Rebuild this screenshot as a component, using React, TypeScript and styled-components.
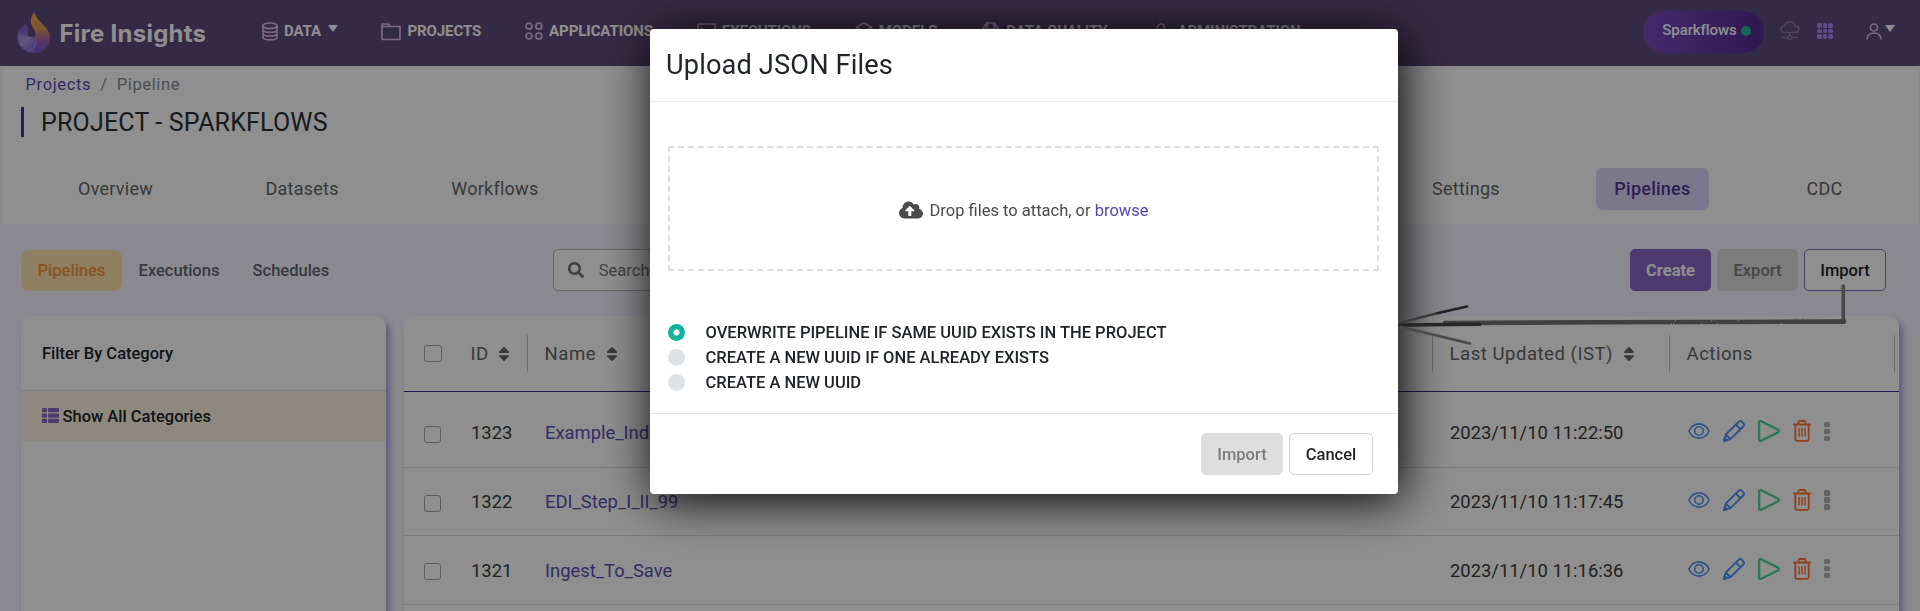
import React from "react";
import styled, { createGlobalStyle, css } from "styled-components";
import { FaSearch, FaSort, FaThList, FaCloudUploadAlt } from "react-icons/fa";

const Global = createGlobalStyle`
  *, *::before, *::after { box-sizing: border-box; }
  html, body { margin: 0; padding: 0; }
  body {
    background: #f7f5ff;
    font-family: Roboto, "Liberation Sans", sans-serif;
    font-size: 16.5px;
    color: #212529;
    overflow: hidden;
  }
  svg { display: block; flex: none; }
`;

const Page = styled.div`
  height: 611px;
  overflow: hidden;
  display: flex;
  flex-direction: column;
`;

/* ---------- top navigation ---------- */

const NavBar = styled.nav`
  height: 66px;
  flex: none;
  display: flex;
  align-items: center;
  background: #5f4b7b;
  color: #fff;
  padding: 0 25px 4px 17px;
`;

const Brand = styled.div`
  display: flex;
  align-items: center;
  gap: 8.5px;
  width: 245px;
  font: 700 24px/32px Inter, sans-serif;
  letter-spacing: 0.25px;
  padding-top: 3px;
`;

const BrandName = styled.span`
  padding-top: 3px;
`;

const NavItems = styled.div`
  display: flex;
  gap: 43.7px;
`;

const NavItem = styled.div<{ $tight?: boolean }>`
  display: flex;
  align-items: center;
  gap: ${(p) => (p.$tight ? 6 : 6.2)}px;
  font-size: 15px;
  font-weight: 700;
  letter-spacing: -0.08px;
  white-space: nowrap;

  svg {
    color: #e0b6ee;
  }
`;

const Caret = styled.i`
  width: 0;
  height: 0;
  border: 5px solid transparent;
  border-top: 7px solid #fff;
  border-bottom: 0;
  margin: -5px 0 0 0.5px;
`;

const NavRight = styled.div`
  margin-left: auto;
  display: flex;
  align-items: center;
`;

const OrgPill = styled.div`
  height: 42px;
  width: 121px;
  margin: 2px 16px 0 0;
  padding: 0 13px 4px 19px;
  border-radius: 21px;
  display: flex;
  align-items: center;
  justify-content: space-between;
  background: linear-gradient(90deg, #7b4cc0, #552a92);
  font-size: 15px;
  font-weight: 500;
  letter-spacing: -0.1px;
`;

const StatusDot = styled.i`
  width: 10px;
  height: 10px;
  margin-top: 2px;
  border-radius: 50%;
  background: #2ab795;
`;

const AppsGrid = styled.div`
  display: grid;
  grid-template-columns: repeat(3, 4.4px);
  gap: 1px;
  margin: 0 33px 0 17px;

  i {
    height: 4.4px;
    border-radius: 1.6px;
    background: #a986ff;
  }
`;

const UserMenu = styled.div`
  display: flex;
  align-items: center;
  gap: 3px;
  color: #e0b6ee;
`;

/* ---------- project header ---------- */

const ProjectPanel = styled.header`
  margin: 3px 2px 0 3px;
  height: 155px;
  flex: none;
  background: #fff;
  padding-top: 5px;
`;

const Crumbs = styled.div`
  display: flex;
  gap: 9px;
  padding-left: 22.5px;
  line-height: 22px;
  letter-spacing: 0.65px;
  color: #868b90;
`;

const Link = styled.a<{ $tone?: string }>`
  color: ${(p) => p.$tone || "#5b4fb5"};
`;

const ProjectTitle = styled.h1`
  margin: 11px 0 0 18px;
  height: 30px;
  line-height: 32px;
  border-left: 3px solid #4d32a3;
  padding-left: 17px;
  font-size: 25px;
  font-weight: 400;
  letter-spacing: 0.18px;
  color: #2c3034;
`;

const Tabs = styled.div`
  display: flex;
  align-items: center;
  height: 42px;
  margin-top: 31px;
  padding: 0 57px 0 56.5px;
`;

const Tab = styled.div<{ $active?: boolean; $gap?: number }>`
  height: 42px;
  line-height: 41.5px;
  padding: 0 18.5px;
  margin-right: ${(p) => p.$gap || 0}px;
  border-radius: 7px;
  font-size: 18px;
  letter-spacing: 0.25px;
  color: #636668;
  ${(p) =>
    p.$active &&
    css`
      background: #dcd5fa;
      color: #503993;
      font-weight: 500;
    `}
`;

const Spacer = styled.div`
  flex: 1;
`;

/* ---------- toolbar ---------- */

const Toolbar = styled.div`
  display: flex;
  align-items: center;
  height: 92px;
  flex: none;
  padding: 0 34px 0 21px;
`;

const SubTab = styled.div<{ $active?: boolean }>`
  height: 41px;
  line-height: 41px;
  padding: 0 16.6px;
  border-radius: 8px;
  font-weight: 500;
  color: #62676f;
  ${(p) =>
    p.$active &&
    css`
      background: #ffe1ac;
      color: #f5933a;
    `}
`;

const SearchBox = styled.div`
  margin-left: 207px;
  width: 560px;
  height: 42px;
  border: 1px solid #b9b9b9;
  border-radius: 5px;
  background: #fff;
  display: flex;
  align-items: center;
  gap: 15px;
  padding-left: 14px;
  color: #757575;
`;

const Actions = styled.div`
  margin-left: auto;
  display: flex;
  gap: 6px;
`;

type Variant = "primary" | "disabled" | "outline" | "plain";

const variants = {
  primary: css`
    background: #8d68c8;
    border-color: #8d68c8;
    color: #fff;
    font-weight: 700;
  `,
  disabled: css`
    background: #dedede;
    border-color: #dedede;
    color: #7c7c7c;
  `,
  outline: css`
    background: #fff;
    border-color: #8d68c8;
    color: #212529;
  `,
  plain: css`
    background: #fff;
    border-color: #ced4da;
    color: #212529;
  `,
};

const Button = styled.button<{ $variant: Variant; $width?: number }>`
  width: ${(p) => p.$width || 81}px;
  height: 42px;
  padding: 1px 0 0;
  border: 1px solid;
  border-radius: 5px;
  font: 500 16.5px/20px Roboto, sans-serif;
  ${(p) => variants[p.$variant]}
`;

/* ---------- content cards ---------- */

const Content = styled.main`
  display: flex;
  gap: 18px;
  padding: 0 21px;
  flex: 1;
`;

const Card = styled.section<{ $width: number }>`
  width: ${(p) => p.$width}px;
  flex: none;
  height: 340px;
  background: #fff;
  border-radius: 10px 10px 0 0;
  box-shadow: 4px 5px 6px #ada2e0;
`;

const FilterHeader = styled.div`
  height: 75px;
  line-height: 75px;
  padding-left: 21px;
  border-bottom: 1px solid #dee2e6;
  font-weight: 500;
`;

const FilterRow = styled.div`
  height: 50px;
  display: flex;
  align-items: center;
  gap: 3.5px;
  padding-left: 21px;
  background: #fcf5e0;
  font-weight: 500;

  svg {
    color: #8d68c8;
    margin-top: -2px;
  }
`;

const TableRow = styled.div`
  display: grid;
  grid-template-columns: 50px 74px 905px 237px 225px;
  align-items: center;
`;

const TableHead = styled(TableRow)`
  height: 76px;
  border-bottom: 1px solid #382c8c;
  margin-bottom: 7px;
`;

const BodyRow = styled(TableRow)`
  height: 68.7px;
  border-bottom: 1px solid #dfe1e4;
`;

const HeadCell = styled.div<{ $rule?: boolean }>`
  height: 37px;
  display: flex;
  align-items: center;
  gap: 6.5px;
  padding-left: 16.5px;
  font-size: 18.6px;
  letter-spacing: 0.5px;
  color: #666;
  border-right: ${(p) => (p.$rule ? "1px solid #c4c4c4" : "0")};
`;

const Cell = styled.div`
  padding-left: 17px;
  font-size: 18.4px;
  color: #3b3b3b;
`;

const Check = styled.i<{ $size: number }>`
  width: ${(p) => p.$size}px;
  height: 17px;
  margin: ${(p) => (p.$size > 17 ? 0 : 3)}px 0 0 20px;
  border: 1px solid #a4a4a4;
  border-radius: 3px;
`;

const RowActions = styled.div`
  display: flex;
  align-items: center;
  gap: 13px;
  padding: 0 0 3px 18px;
`;

const Kebab = styled.div`
  display: grid;
  gap: 1.7px;

  i {
    width: 6px;
    height: 5.3px;
    border-radius: 1.5px;
    background: #aeb2b7;
  }
`;

/* ---------- modal ---------- */

const Overlay = styled.div`
  position: fixed;
  inset: 0;
  background: rgba(0, 0, 0, 0.44);
  display: flex;
  justify-content: center;
  align-items: flex-start;
  padding: 29px 0 0 128px;
`;

const Dialog = styled.div`
  width: 748px;
  height: 465px;
  background: #fff;
  border-radius: 4px;
  box-shadow: 4px 6px 50px #000;
  display: flex;
  flex-direction: column;
`;

const DialogHead = styled.div`
  height: 73px;
  line-height: 72px;
  border-bottom: 1px solid #e9ecef;
  padding-left: 16px;
  font-size: 27.2px;
  letter-spacing: 0.14px;
`;

const DialogBody = styled.div`
  flex: 1;
  padding: 44px 19px 0 18px;
`;

const DropZone = styled.div`
  height: 125px;
  border: 2px dashed #ddd;
  display: flex;
  align-items: center;
  justify-content: center;
  gap: 7px;
  color: #4a4a4a;
  padding-top: 3px;
`;

const Options = styled.div`
  margin-top: 49px;
`;

const Option = styled.label`
  height: 25px;
  display: flex;
  align-items: center;
  gap: 20.5px;
  font-weight: 500;
`;

const Radio = styled.i<{ $on?: boolean }>`
  width: 17px;
  height: 17px;
  border-radius: 50%;
  background: ${(p) =>
    p.$on ? "radial-gradient(circle, #fff 2.7px, #12b39b 3.4px)" : "#dee2e6"};
`;

const DialogFoot = styled.div`
  height: 81px;
  border-top: 1px solid #e0e2e4;
  display: flex;
  justify-content: flex-end;
  gap: 6px;
  padding: 19px 25px 0 0;
`;

/* Hand-drawn annotation lying over the page. */
const ArrowLayer = styled.svg`
  position: fixed;
  left: 1390px;
  top: 270px;
`;

/* ---------- drawings ---------- */

const Logo = () => (
  <svg width="34" height="42" viewBox="17 12 34 42">
    <defs>
      <linearGradient id="flame" x1="0" y1="0" x2="0" y2="1">
        <stop offset="0" stopColor="#f5b04a" />
        <stop offset="0.4" stopColor="#e29a55" />
        <stop offset="0.7" stopColor="#9a64b0" />
        <stop offset="1" stopColor="#7355d8" />
      </linearGradient>
      <linearGradient id="swirl" x1="0" y1="0" x2="0.7" y2="1">
        <stop offset="0" stopColor="#6a48c8" />
        <stop offset="0.55" stopColor="#9c88dc" />
        <stop offset="1" stopColor="#7a5fd6" />
      </linearGradient>
    </defs>
    <path d="M27 23C20 27 17.500 32 17.700 37C18 46 25 53 34 53C41 53 46 48 47 42L36 36C34 38.500 29 38 28 35C27 31 28.500 27 27 23Z" fill="url(#swirl)" />
    <path d="M34.500 12C30.500 17 30 22 32 26C34 29.500 36 32 35.500 35C35 37 33 37.800 31 37C36 40 38 46 34 53C43 53 50 46 50 37C50 27 37 23 34.500 12Z" fill="url(#flame)" />
    <path d="M18 31C21 36 27 38 33 37M20 46C26 47 32 44 34 38M28 52C33 50 37 45 36 38" fill="none" stroke="#c3b6f2" strokeOpacity="0.55" strokeWidth="0.9" />
    <path d="M18 33C21 37 27 38 31 37C30 42 26 45 20 46C18 43 17 38 18 33Z" fill="#b9abea" fillOpacity="0.5" />
  </svg>
);

const line = { fill: "none", stroke: "currentColor", strokeWidth: 1.7, strokeLinecap: "round", strokeLinejoin: "round" } as const;

const DatabaseIcon = () => (
  <svg width="16" height="19" viewBox="0 0 16 19" {...line}>
    <ellipse cx="8" cy="3.800" rx="7" ry="2.800" />
    <path d="M1 3.800V15c0 1.600 3 2.900 7 2.900s7-1.300 7-2.900V3.800M1 7.500c0 1.600 3 2.900 7 2.900s7-1.300 7-2.900M1 11.300c0 1.600 3 2.900 7 2.900s7-1.300 7-2.900" />
  </svg>
);
const FolderIcon = () => (
  <svg width="20" height="19" viewBox="0 0 20 19" {...line}>
    <path d="M1 17V2h6.500l2 2.500H19V17.500H1.500zM1 4.500h9" />
  </svg>
);
const CirclesIcon = () => (
  <svg width="18" height="18" viewBox="0 0 18 18" {...line}>
    <circle cx="4" cy="4.200" r="3" /><circle cx="13.800" cy="4.200" r="3" />
    <circle cx="4" cy="14" r="3" /><circle cx="13.800" cy="14" r="3" />
  </svg>
);
const WindowIcon = () => (
  <svg width="19" height="16" viewBox="0 0 19 16" {...line}>
    <path d="M1 1h17v14H1zM4.500 5l3 3-3 3M10 11h4" />
  </svg>
);
const HexIcon = () => (
  <svg width="18" height="18" viewBox="0 0 18 18" {...line}>
    <path d="M9 1l7.500 4.200v7.600L9 17l-7.500-4.200V5.200zM1.500 5.200L9 9.500l7.500-4.300M9 9.500V17" />
  </svg>
);
const GlobeIcon = () => (
  <svg width="19" height="18" viewBox="0 0 18 18" {...line}>
    <path d="M5 1h8l4 6-8 10L1 7zM6.500 1C4 6 5 12 9 17c4-5 5-11 2.500-16M1 7h16" />
  </svg>
);
const PersonIcon = ({ width = 16 }: { width?: number }) => (
  <svg width={width} height="17" viewBox="0 0 16 17" {...line}>
    <circle cx="8" cy="4.500" r="3.500" />
    <path d="M1 15.800c.5-3.600 3.200-5.800 7-5.800s6.500 2.200 7 5.800" />
  </svg>
);
const CloudIcon = () => (
  <svg width="20" height="20" viewBox="0 0 20 20" {...line} stroke="#8d7da6" strokeWidth="1.500">
    <path d="M5 11.500C2.500 11.500 1 10 1 8.200 1 6.300 2.500 5 4.500 5 5.200 2.500 7.300 1 10 1s4.700 1.500 5.300 4c2.200 0 3.700 1.400 3.700 3.300 0 1.800-1.500 3.200-3.700 3.200zM10 11.500v3M2.500 16.600h5M12.500 16.600h5" />
    <circle cx="10" cy="16.600" r="2" />
  </svg>
);
const EyeIcon = () => (
  <svg width="22" height="16" viewBox="0 0 22 16" {...line} stroke="#4f94f5" strokeWidth="1.600">
    <path d="M.8 8C3 3.500 6.500.9 11 .9S19 3.500 21.200 8C19 12.500 15.500 15.100 11 15.100S3 12.500.8 8z" />
    <circle cx="11" cy="8" r="4.200" />
  </svg>
);
const PencilIcon = () => (
  <svg width="22" height="22" viewBox="0 0 22 22" {...line} stroke="#4f94f5" strokeWidth="1.900">
    <path d="M1 21l1.800-6.500L15.500 1.800c1-1 2.300-1 3.200-.1l1.600 1.600c.9.900.9 2.200-.1 3.200L7.500 19.200zM12.800 4.500l4.700 4.700M3 14.800l4.300 4.200" />
    <path d="M1 21l.8-3 2.200 2.200z" fill="#4f94f5" />
  </svg>
);
const PlayIcon = () => (
  <svg width="22" height="22" viewBox="0 0 22 22" {...line} stroke="#42d892" strokeWidth="2.200">
    <path d="M1.200 2.300c0-1.100 1-1.600 2-1.100l17 8.600c1 .6 1 1.800 0 2.400l-17 8.600c-1 .5-2 0-2-1.100z" />
  </svg>
);
const TrashIcon = () => (
  <svg width="18" height="22" viewBox="0 0 18 22" {...line} stroke="#ff7230" strokeWidth="1.800">
    <path d="M.9 4.500h16.200M2.300 4.500v14.800c0 .9.600 1.500 1.500 1.500h10.400c.9 0 1.500-.6 1.500-1.500V4.500M5.500 4.300V2.500c0-.9.500-1.500 1.400-1.500h4.200c.9 0 1.400.6 1.400 1.500v1.800" />
    <path d="M6 8.500v7.500M9 8.500v7.500M12 8.500v7.500" strokeWidth="1.400" />
  </svg>
);

const rows = [
  { id: "1323", name: "Example_Industry", date: "2023/11/10 11:22:50" },
  { id: "1322", name: "EDI_Step_I_II_99", date: "2023/11/10 11:17:45" },
  { id: "1321", name: "Ingest_To_Save", date: "2023/11/10 11:16:36" },
];

const SortMark = () => <FaSort size={18} color="#666" />;

export default function App() {
  return (
    <>
      <Global />
      <Page>
        <NavBar>
          <Brand>
            <Logo />
            <BrandName>Fire Insights</BrandName>
          </Brand>
          <NavItems>
            <NavItem $tight><DatabaseIcon />DATA<Caret /></NavItem>
            <NavItem><FolderIcon />PROJECTS</NavItem>
            <NavItem><CirclesIcon />APPLICATIONS</NavItem>
            <NavItem><WindowIcon />EXECUTIONS</NavItem>
            <NavItem><HexIcon />MODELS</NavItem>
            <NavItem><GlobeIcon />DATA QUALITY</NavItem>
            <NavItem><PersonIcon width={20} />ADMINISTRATION</NavItem>
          </NavItems>
          <NavRight>
            <OrgPill>Sparkflows<StatusDot /></OrgPill>
            <CloudIcon />
            <AppsGrid>
              {Array.from({ length: 9 }, (_, i) => <i key={i} />)}
            </AppsGrid>
            <UserMenu><PersonIcon /><Caret /></UserMenu>
          </NavRight>
        </NavBar>

        <ProjectPanel>
          <Crumbs>
            <Link>Projects</Link>
            <span>/</span>
            <span>Pipeline</span>
          </Crumbs>
          <ProjectTitle>PROJECT - SPARKFLOWS</ProjectTitle>
          <Tabs>
            <Tab $gap={75.5}>Overview</Tab>
            <Tab $gap={75.5}>Datasets</Tab>
            <Tab>Workflows</Tab>
            <Spacer />
            <Tab $gap={77.5}>Settings</Tab>
            <Tab $gap={79} $active>Pipelines</Tab>
            <Tab>CDC</Tab>
          </Tabs>
        </ProjectPanel>

        <Toolbar>
          <SubTab $active>Pipelines</SubTab>
          <SubTab>Executions</SubTab>
          <SubTab>Schedules</SubTab>
          <SearchBox><FaSearch size={16} />Search</SearchBox>
          <Actions>
            <Button $variant="primary">Create</Button>
            <Button $variant="disabled">Export</Button>
            <Button $variant="outline" $width={82}>Import</Button>
          </Actions>
        </Toolbar>

        <Content>
          <Card $width={365}>
            <FilterHeader>Filter By Category</FilterHeader>
            <FilterRow><FaThList size={17} />Show All Categories</FilterRow>
          </Card>
          <Card $width={1495}>
            <TableHead>
              <Check $size={18} />
              <HeadCell $rule>ID<SortMark /></HeadCell>
              <HeadCell $rule>Name<SortMark /></HeadCell>
              <HeadCell $rule>Last Updated (IST)<SortMark /></HeadCell>
              <HeadCell $rule>Actions</HeadCell>
            </TableHead>
            {rows.map((r) => (
              <BodyRow key={r.id}>
                <Check $size={17} />
                <Cell>{r.id}</Cell>
                <Cell><Link>{r.name}</Link></Cell>
                <Cell>{r.date}</Cell>
                <RowActions>
                  <EyeIcon />
                  <PencilIcon />
                  <PlayIcon />
                  <TrashIcon />
                  <Kebab><i /><i /><i /></Kebab>
                </RowActions>
              </BodyRow>
            ))}
          </Card>
        </Content>
      </Page>

      <Overlay>
        <Dialog role="dialog">
          <DialogHead>Upload JSON Files</DialogHead>
          <DialogBody>
            <DropZone>
              <FaCloudUploadAlt size={24} />
              <span>Drop files to attach, or <Link $tone="#5346b4">browse</Link></span>
            </DropZone>
            <Options>
              <Option><Radio $on />OVERWRITE PIPELINE IF SAME UUID EXISTS IN THE PROJECT</Option>
              <Option><Radio />CREATE A NEW UUID IF ONE ALREADY EXISTS</Option>
              <Option><Radio />CREATE A NEW UUID</Option>
            </Options>
          </DialogBody>
          <DialogFoot>
            <Button $variant="disabled" $width={82}>Import</Button>
            <Button $variant="plain" $width={84}>Cancel</Button>
          </DialogFoot>
        </Dialog>
      </Overlay>

      <ArrowLayer width="470" height="85" viewBox="1390 270 470 85">
        <defs>
          <filter id="pencil" filterUnits="userSpaceOnUse" x="1390" y="270" width="470" height="85">
            <feTurbulence type="fractalNoise" baseFrequency="0.6" numOctaves="2" seed="4" result="n" />
            <feDisplacementMap in="SourceGraphic" in2="n" scale="1.8" xChannelSelector="R" yChannelSelector="G" />
          </filter>
        </defs>
        <g filter="url(#pencil)" fill="none" strokeLinecap="round">
          <path d="M1843.300 286V322" stroke="#484848" strokeWidth="3.600" />
          <path d="M1844 321.600L1600 322.300L1445 323" stroke="#404040" strokeWidth="4.600" />
          <path d="M1480 324.200L1400 325" stroke="#262626" strokeWidth="3.400" />
          <path d="M1401 322.500L1440 312.500" stroke="#3c3c3c" strokeWidth="2.600" />
          <path d="M1438 313L1467 306.500" stroke="#232323" strokeWidth="2.600" />
          <path d="M1401 327L1470 343.500" stroke="#4a4a4a" strokeWidth="2.600" />
        </g>
      </ArrowLayer>
    </>
  );
}
